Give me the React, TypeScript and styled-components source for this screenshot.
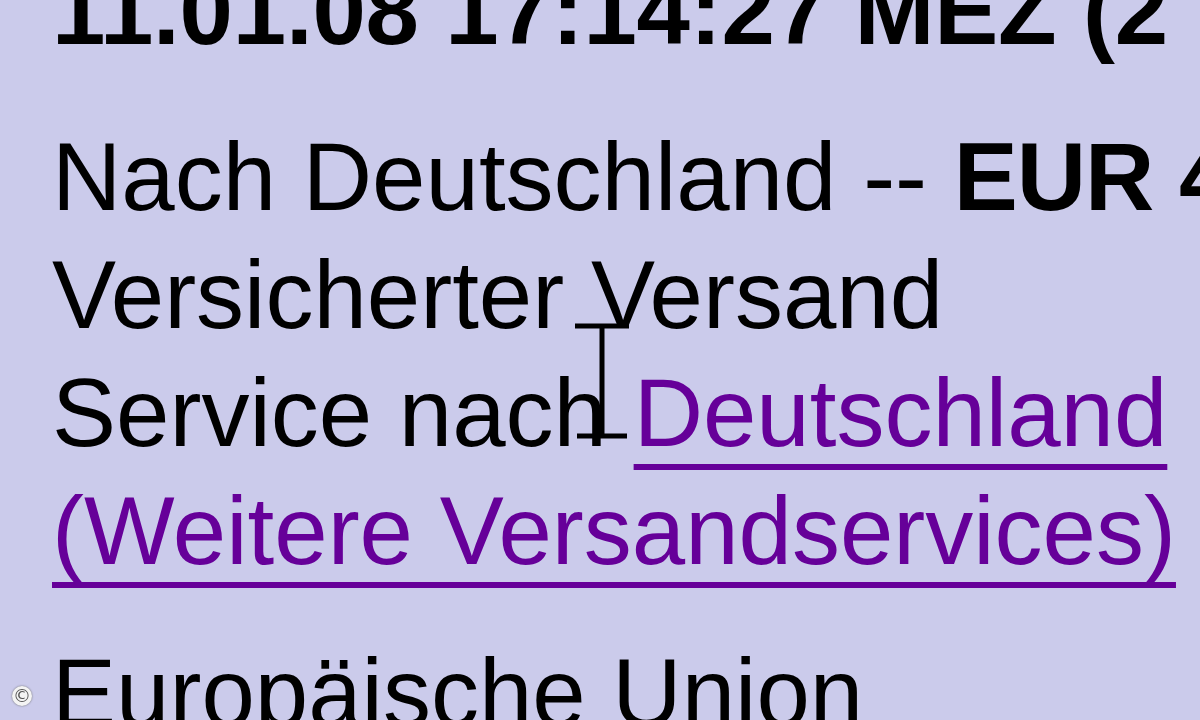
import React from "react";
import styled, { createGlobalStyle } from "styled-components";

const Global = createGlobalStyle`
  html, body {
    margin: 0;
    padding: 0;
    background: #cbcbeb;
  }
  body {
    width: 1200px;
    height: 720px;
    overflow: hidden;
  }
`;

// the mouse cursor resting over "nach"
function IBeam() {
  return (
    <S.Cursor width="60" height="120" viewBox="0 0 60 120">
      <path d="M2 4 H56 M29 4 V114 M4 114 H54" stroke="#000" strokeWidth="5" fill="none" />
    </S.Cursor>
  );
}

function App() {
  return (
    <>
      <Global />
      <S.Page>
        <S.Stamp>11.01.08 17:14:27 MEZ (2 Tage 3 Stunden)</S.Stamp>
        <S.Block>
          <S.Line>
            Nach Deutschland -- <b>EUR 4,90</b>
          </S.Line>
          <S.Line>Versicherter Versand</S.Line>
          <S.Line>
            Service nach <S.Link href="#">Deutschland</S.Link>
          </S.Line>
          <S.Line>
            <S.Link href="#">(Weitere Versandservices)</S.Link>
          </S.Line>
        </S.Block>
        <S.Block>
          <S.Line>Europäische Union</S.Line>
        </S.Block>
        <IBeam />
      </S.Page>
      <S.Copy>©</S.Copy>
    </>
  );
}

const S = {
  Page: styled.div`
    position: relative;
    height: 720px;
    overflow: hidden;
    padding-left: 52px;
    font-family: "Liberation Sans", Arial, sans-serif;
    font-size: 96px;
    line-height: 118px;
    color: #000;
  `,

  Stamp: styled.div`
    margin-top: -48px;
    padding-bottom: 4px;
    font-weight: bold;
    letter-spacing: -0.2px;
    white-space: nowrap;
  `,

  Block: styled.div`
    margin-top: 44px;
  `,

  Line: styled.div`
    white-space: nowrap;

    & > b {
      font-weight: bold;
      letter-spacing: -1px;
    }
  `,

  Link: styled.a`
    color: #660099;
    text-decoration: underline;
    text-decoration-thickness: 6px;
    text-underline-offset: 18px;
    text-decoration-skip-ink: none;
  `,

  Cursor: styled.svg`
    position: absolute;
    left: 573px;
    top: 322px;
  `,

  Copy: styled.div`
    position: fixed;
    left: 12px;
    top: 686px;
    width: 20px;
    height: 20px;
    border-radius: 50%;
    background: #f4f4f4;
    color: #555;
    font-family: "DejaVu Sans", sans-serif;
    font-size: 18px;
    line-height: 20px;
    text-align: center;
    box-shadow: 0 0 2px #666;
  `,
};

export default App;
